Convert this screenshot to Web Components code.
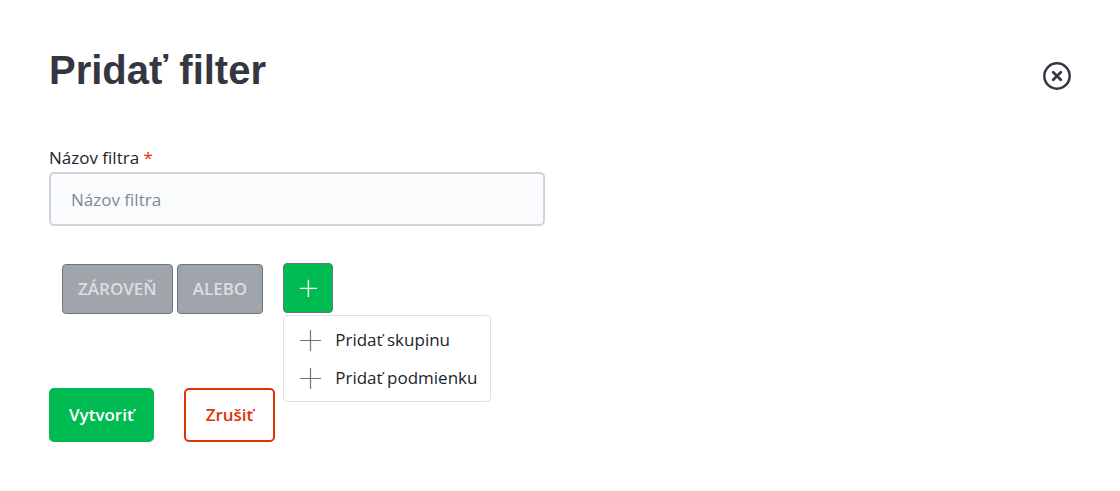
<!DOCTYPE html>
<html lang="sk">
<head>
  <meta charset="UTF-8">
  <meta name="viewport" content="width=device-width, initial-scale=1">
  <title>Pridať filter</title>
  <style>
    :root {
      --dark: #343741;
      --green: #00ba52;
      --red: #df3207;
      --gray: #6c757d;
      --light-gray: #cfd3da;
    }
    body {
      margin: 0;
      background: #fff;
      color: #212529;
      font-family: "Open Sans", "Noto Sans", sans-serif;
      font-size: 17px;
      line-height: 24px;
    }
  </style>
</head>
<body>
  <filter-dialog heading="Pridať filter">
    <text-field label="Názov filtra" required></text-field>
    <condition-bar></condition-bar>
    <action-button slot="actions" variant="primary">Vytvoriť</action-button>
    <action-button slot="actions" variant="outline">Zrušiť</action-button>
  </filter-dialog>

  <script>
    // icono "+" compartido por el boton y el menu
    const plusIcon = `
      <svg viewBox="0 0 22 22" aria-hidden="true">
        <path d="M11.5 1V22M1 11.5H22" fill="none" stroke="currentColor" vector-effect="non-scaling-stroke"/>
      </svg>
    `;

    // dialog: title, close button, form body and actions
    class FilterDialog extends HTMLElement {
      constructor() {
        super();
        this.attachShadow({ mode: "open" });
      }

      connectedCallback() {
        this.shadowRoot.innerHTML = `
          <style>
            :host {
              display: block;
              padding: 46px 49px;
            }
            header {
              display: flex;
              justify-content: space-between;
              align-items: center;
              margin-bottom: 50px;
            }
            h1 {
              margin: 0;
              color: var(--dark);
              font: bold 40px/48px "Liberation Sans", Arial, sans-serif;
            }
            .close {
              display: flex;
              margin-top: 12px;
              padding: 0;
              border: none;
              background: none;
              color: var(--dark);
              cursor: pointer;
            }
            .close svg {
              width: 28px;
              height: 28px;
            }
            .body {
              display: grid;
              grid-template-columns: 1fr 1fr;
              gap: 37px 30px;
            }
            footer {
              display: flex;
              gap: 30px;
              margin-top: 74px;
            }
          </style>

          <header>
            <h1>${this.getAttribute("heading")}</h1>
            <button class="close" type="button" aria-label="Zavrieť">
              <svg viewBox="0 0 28 28" fill="none" stroke="currentColor" stroke-linecap="round">
                <circle cx="14" cy="14" r="12.7" stroke-width="2.5"/>
                <path d="M10.2 10.2L17.8 17.8M17.8 10.2L10.2 17.8" stroke-width="2.7"/>
              </svg>
            </button>
          </header>
          <div class="body"><slot></slot></div>
          <footer><slot name="actions"></slot></footer>
        `;
      }
    }

    class TextField extends HTMLElement {
      constructor() {
        super();
        this.attachShadow({ mode: "open" });
      }

      connectedCallback() {
        const label = this.getAttribute("label");
        const required = this.hasAttribute("required");

        this.shadowRoot.innerHTML = `
          <style>
            :host {
              display: block;
              grid-column: 1;
            }
            label {
              display: block;
              margin-bottom: 2px;
              padding-top: 2px;
            }
            .required {
              color: var(--red);
            }
            input {
              display: block;
              box-sizing: border-box;
              width: 100%;
              height: 54px;
              padding: 0 20px;
              border: 2px solid var(--light-gray);
              border-radius: 5px;
              background: #fafbfd;
              color: inherit;
              font: inherit;
            }
            input::placeholder {
              color: #808a99;
              opacity: 1;
            }
          </style>

          <label for="field">${label}${required ? ` <span class="required">*</span>` : ""}</label>
          <input id="field" type="text" placeholder="${label}" ${required ? "required" : ""}>
        `;
      }
    }

    // AND / OR switch followed by the add menu
    class ConditionBar extends HTMLElement {
      constructor() {
        super();
        this.attachShadow({ mode: "open" });
      }

      connectedCallback() {
        this.shadowRoot.innerHTML = `
          <style>
            :host {
              display: flex;
              grid-column: 1 / -1;
              padding-left: 13px;
            }
            .operators {
              display: flex;
              gap: 4px;
              margin: 1px 20px 0 0;
            }
            button {
              height: 50px;
              padding: 0 15px;
              border: 1px solid var(--gray);
              border-radius: 4px;
              background: #a0a4ab;
              color: #dcdee1;
              font: inherit;
              font-weight: 600;
            }
          </style>

          <div class="operators">
            <button type="button" disabled>ZÁROVEŇ</button>
            <button type="button" disabled>ALEBO</button>
          </div>
          <add-menu></add-menu>
        `;
      }
    }

    class AddMenu extends HTMLElement {
      constructor() {
        super();
        this.attachShadow({ mode: "open" });
      }

      connectedCallback() {
        this.shadowRoot.innerHTML = `
          <style>
            :host {
              display: block;
              position: relative;
              height: 50px;
            }
            button {
              display: flex;
              align-items: center;
              border: none;
              background: none;
              color: inherit;
              font: inherit;
              cursor: pointer;
            }
            .toggle {
              justify-content: center;
              width: 50px;
              height: 50px;
              padding: 0;
              border: 1px solid var(--gray);
              border-radius: 4px;
              background: var(--green);
              color: #fff;
            }
            .toggle svg {
              width: 18px;
              height: 18px;
              stroke-width: 1.4;
            }
            .menu {
              position: absolute;
              top: 100%;
              left: 0;
              box-sizing: border-box;
              min-width: 208px;
              margin-top: 2px;
              padding: 5px 0 4px;
              border: 1px solid #dee0e3;
              border-radius: 4px;
              background: #fff;
            }
            .menu[hidden] {
              display: none;
            }
            .menu button {
              gap: 14px;
              width: 100%;
              height: 38px;
              padding: 0 12px 0 15px;
              white-space: nowrap;
            }
            .menu button:hover {
              background: #f8f9fa;
            }
            .menu svg {
              flex: none;
              width: 22px;
              height: 22px;
              color: var(--gray);
              stroke-width: 1.2;
            }
          </style>

          <button class="toggle" type="button" aria-label="Pridať" aria-expanded="true">${plusIcon}</button>
          <div class="menu">
            <button type="button">${plusIcon}<span>Pridať skupinu</span></button>
            <button type="button">${plusIcon}<span>Pridať podmienku</span></button>
          </div>
        `;

        const toggle = this.shadowRoot.querySelector(".toggle");
        const menu = this.shadowRoot.querySelector(".menu");
        toggle.addEventListener("click", () => {
          menu.hidden = !menu.hidden;
          toggle.setAttribute("aria-expanded", String(!menu.hidden));
        });
      }
    }

    class ActionButton extends HTMLElement {
      constructor() {
        super();
        this.attachShadow({ mode: "open" });
      }

      connectedCallback() {
        this.shadowRoot.innerHTML = `
          <style>
            :host {
              display: block;
            }
            button {
              height: 54px;
              padding: 0 18px;
              border: 2px solid var(--green);
              border-radius: 5px;
              background: var(--green);
              color: #fff;
              font: inherit;
              font-weight: 600;
              cursor: pointer;
            }
            :host([variant="outline"]) button {
              padding: 0 20px;
              border-color: var(--red);
              background: #fff;
              color: var(--red);
            }
          </style>

          <button type="button"><slot></slot></button>
        `;
      }
    }

    customElements.define("filter-dialog", FilterDialog);
    customElements.define("text-field", TextField);
    customElements.define("condition-bar", ConditionBar);
    customElements.define("add-menu", AddMenu);
    customElements.define("action-button", ActionButton);
  </script>
</body>
</html>
